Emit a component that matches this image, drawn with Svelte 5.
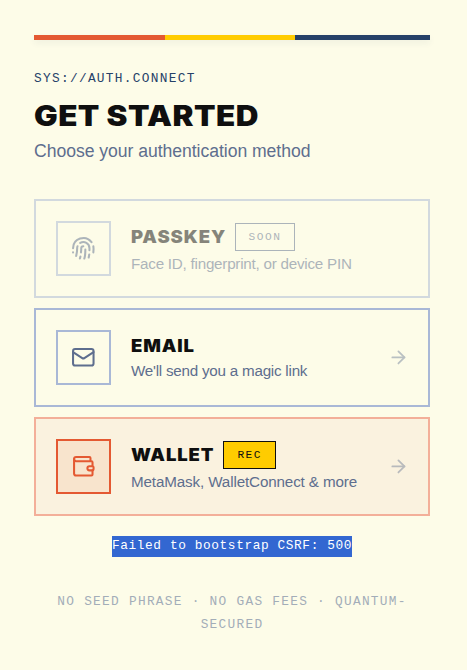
<script lang="ts">
  type Method = {
    id: string;
    title: string;
    text: string;
    badge?: string;
    disabled?: boolean;
  };

  const methods: Method[] = [
    { id: 'passkey', title: 'PASSKEY', text: 'Face ID, fingerprint, or device PIN', badge: 'SOON', disabled: true },
    { id: 'email', title: 'EMAIL', text: "We'll send you a magic link" },
    { id: 'wallet', title: 'WALLET', text: 'MetaMask, WalletConnect & more', badge: 'REC' },
  ];

  let error = $state('Failed to bootstrap CSRF: 500');
</script>

<main class="auth">
  <div class="stripe"></div>

  <header>
    <div class="sys">SYS://AUTH.CONNECT</div>
    <h1>GET STARTED</h1>
    <p class="subtitle">Choose your authentication method</p>
  </header>

  <div class="methods">
    {#each methods as method (method.id)}
      <button class="method {method.id}" disabled={method.disabled}>
        <span class="icon">
          <svg viewBox="0 0 24 24">
            {#if method.id === 'passkey'}
              <path d="M12 10a2 2 0 0 0-2 2c0 1.02-.1 2.51-.26 4" />
              <path d="M14 13.12c0 2.38 0 6.38-1 8.88" />
              <path d="M17.29 21.02c.12-.6.43-2.3.5-3.02" />
              <path d="M2 12a10 10 0 0 1 18-6" />
              <path d="M2 16h.01" />
              <path d="M21.8 16c.2-2 .131-5.354 0-6" />
              <path d="M5 19.5C5.5 18 6 15 6 12a6 6 0 0 1 .34-2" />
              <path d="M8.65 22c.21-.66.45-1.32.57-2" />
              <path d="M9 6.8a6 6 0 0 1 9 5.2v2" />
            {:else if method.id === 'email'}
              <rect x="2" y="4" width="20" height="16" rx="2" />
              <path d="m22 7-8.97 5.7a1.94 1.94 0 0 1-2.06 0L2 7" />
            {:else}
              <path d="M19 7V4a1 1 0 0 0-1-1H5a2 2 0 0 0 0 4h15a1 1 0 0 1 1 1v4h-3a2 2 0 0 0 0 4h3a1 1 0 0 0 1-1v-2a1 1 0 0 0-1-1" />
              <path d="M3 5v14a2 2 0 0 0 2 2h15a1 1 0 0 0 1-1v-4" />
            {/if}
          </svg>
        </span>
        <span class="body">
          <span class="heading">
            <span class="title">{method.title}</span>
            {#if method.badge}
              <span class="badge">{method.badge}</span>
            {/if}
          </span>
          <span class="text">{method.text}</span>
        </span>
        {#if !method.disabled}
          <svg class="arrow" viewBox="0 0 24 24"><path d="M5 12h14" /><path d="m12 5 7 7-7 7" /></svg>
        {/if}
      </button>
    {/each}
  </div>

  {#if error}
    <p class="error"><span>{error}</span></p>
  {/if}

  <footer>NO SEED PHRASE · NO GAS FEES · QUANTUM-SECURED</footer>
</main>

<style>
  :global(body) {
    background: #fdfce8;
  }
  .auth {
    box-sizing: border-box;
    min-height: 670px;
    padding: 35px 37px 0 34px;
    font-family: 'Liberation Sans', Arial, sans-serif;
    color: #0f0f0f;
  }
  .stripe {
    height: 5px;
    background: linear-gradient(90deg, #e45932 33%, #ffcc00 33%, #ffcc00 66%, #264168 66%);
    box-shadow: 0 3px 6px rgba(43, 69, 112, 0.07);
  }
  header {
    height: 159px;
    box-sizing: border-box;
    padding-top: 29px;
    white-space: nowrap;
  }
  .sys {
    font: 12.8px/20px 'Courier New', 'Liberation Mono', monospace;
    letter-spacing: 1.3px;
    color: #264168;
  }
  h1 {
    margin: 10px 0 0;
    font: 900 28px/34px Inter, sans-serif;
    letter-spacing: 0.4px;
    /* widen the heavy caps */
    transform: scaleX(1.122);
    transform-origin: left;
  }
  .subtitle {
    margin: 5px 0 0;
    font-size: 17.6px;
    line-height: 26px;
    letter-spacing: -0.04px;
    color: #5e6e8e;
  }
  .methods {
    display: flex;
    flex-direction: column;
    gap: 10px;
  }
  .method {
    box-sizing: border-box;
    display: flex;
    align-items: center;
    gap: 20px;
    height: 99px;
    padding: 0 20px;
    border: 2px solid #a9b8d6;
    background: transparent;
    font: inherit;
    color: inherit;
    text-align: left;
    white-space: nowrap;
  }
  .method:disabled {
    opacity: 0.5;
  }
  .wallet {
    border-color: #f3af99;
    background: #faf2df;
  }
  .icon {
    box-sizing: border-box;
    display: flex;
    align-items: center;
    justify-content: center;
    flex: none;
    width: 55px;
    height: 55px;
    border: 2px solid #a9b8d6;
    color: #5e6e8e;
  }
  .wallet .icon {
    border-color: #e45932;
    background: #f8e4cd;
    color: #e45932;
  }
  svg {
    width: 24.6px;
    height: 24.6px;
    fill: none;
    stroke: currentColor;
    stroke-width: 2;
    stroke-linecap: round;
    stroke-linejoin: round;
  }
  .body {
    display: flex;
    flex-direction: column;
    flex: 1;
  }
  .heading {
    display: flex;
    align-items: center;
    gap: 10px;
  }
  .title {
    font: 900 17.6px/26px Inter, sans-serif;
    letter-spacing: 0.85px;
    padding-right: 3px;
    transform: scaleX(1.05);
    transform-origin: left;
  }
  .badge {
    box-sizing: border-box;
    height: 28px;
    margin: 2px 0 1px;
    padding: 0 13px;
    border: 1px solid #5e6e8e;
    font: 11.2px/26px 'Courier New', 'Liberation Mono', monospace;
    letter-spacing: 1.5px;
    color: #5e6e8e;
  }
  .wallet .badge {
    border-color: #0f0f0f;
    background: #ffcc00;
    color: #0f0f0f;
  }
  .text {
    font-size: 15.2px;
    line-height: 24px;
    letter-spacing: -0.23px;
    color: #5e6e8e;
  }
  .wallet .text {
    letter-spacing: -0.13px;
  }
  .arrow {
    flex: none;
    width: 20.8px;
    height: 20.8px;
    margin: 0 -0.6px 1px 0;
    color: #5e6e8e;
    opacity: 0.42;
  }
  .error {
    margin: 20px 0 0;
    text-align: center;
    font: 12.8px/19px 'Courier New', 'Liberation Mono', monospace;
    letter-spacing: 0.6px;
    color: #fff;
  }
  .error span {
    display: inline-block;
    padding-bottom: 2px;
    background: #3367d1;
  }
  footer {
    margin-top: 33px;
    text-align: center;
    font: 12.8px/23px 'Courier New', 'Liberation Mono', monospace;
    letter-spacing: 1.28px;
    color: #a3adb8;
  }
</style>
